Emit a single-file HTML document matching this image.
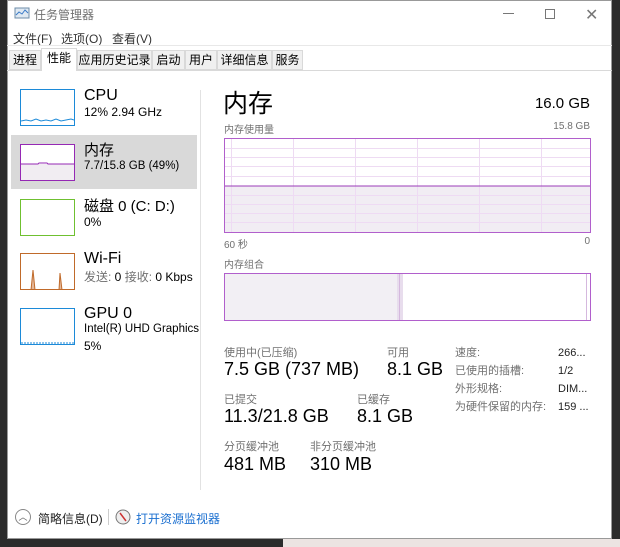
<!DOCTYPE html>
<html><head><meta charset="utf-8"><style>
*{margin:0;padding:0;box-sizing:border-box}
body{width:620px;height:547px;overflow:hidden;background:#2b2b2b;position:relative;font-family:"Liberation Sans","Noto Sans CJK SC",sans-serif;color:#000}
.a{position:absolute;white-space:nowrap}
.win{position:absolute;left:7px;top:0;width:605px;height:539px;background:#fff;border:1px solid #999}
.g{color:#707070}
.tab{position:absolute;top:50px;height:20px;background:#f0f0f0;border:1px solid #d9d9d9;font-size:12px;line-height:18px;text-align:center}
.th{position:absolute;left:20px;width:55px;height:37px;background:#fff}
</style></head><body>
<div class="a" style="left:0;top:539px;width:283px;height:8px;background:#2b2b2b"></div>
<div class="a" style="left:283px;top:539px;width:337px;height:8px;background:#ece4e2"></div>
<div class="win"></div>
<svg class="a" style="left:14px;top:7px" width="16" height="14"><rect x="1" y="1" width="14" height="10" fill="#dfe9f2" stroke="#6c8ca8"/><polyline points="2,8 5,5 8,7 11,3 14,6" fill="none" stroke="#3a7bc8"/></svg>
<div class="a g" style="left:34px;top:6px;font-size:12px">任务管理器</div>
<div class="a" style="left:503px;top:13px;width:11px;border-top:1px solid #777"></div>
<div class="a" style="left:545px;top:9px;width:10px;height:10px;border:1px solid #777"></div>
<div class="a" style="left:585px;top:5px;font-size:16px;color:#777">✕</div>
<div class="a" style="left:13px;top:30px;font-size:12px;color:#333">文件(F)</div>
<div class="a" style="left:61px;top:30px;font-size:12px;color:#333">选项(O)</div>
<div class="a" style="left:112px;top:30px;font-size:12px;color:#333">查看(V)</div>
<div class="a" style="left:7px;top:45px;width:605px;border-top:1px solid #e8e8e8"></div>
<div class="a" style="left:7px;top:70px;width:605px;border-top:1px solid #d9d9d9"></div>
<div class="tab" style="left:9px;width:32px">进程</div>
<div class="tab" style="left:41px;top:48px;width:36px;height:23px;background:#fff;border-bottom:none">性能</div>
<div class="tab" style="left:77px;width:75px">应用历史记录</div>
<div class="tab" style="left:152px;width:33px">启动</div>
<div class="tab" style="left:185px;width:32px">用户</div>
<div class="tab" style="left:217px;width:55px">详细信息</div>
<div class="tab" style="left:272px;width:31px">服务</div>
<div class="a" style="left:11px;top:135px;width:186px;height:54px;background:#d9d9d9"></div>
<div class="a" style="left:200px;top:90px;height:400px;border-left:1px solid #e2e2e2"></div>
<svg class="th" style="top:89px;border:1px solid #1c8ad8"><polyline points="0,31 5,30 10,31 15,29 20,31 25,30 30,31 35,29 40,31 45,30 50,29 53,30" fill="none" stroke="#1c8ad8"/></svg>
<svg class="th" style="top:144px;border:1px solid #9528b4;background:#fff"><rect x="0" y="19" width="53" height="17" fill="#f1edf2"/><polyline points="0,19 17,19 18,18 26,18 27,19 53,19" fill="none" stroke="#9528b4"/></svg>
<div class="th" style="top:199px;border:1px solid #6fc030"></div>
<svg class="th" style="top:253px;border:1px solid #c06a2a"><polyline points="10,36 12,16 14,36 38,36 39,19 41,36" fill="#e4b89a" stroke="#c06a2a"/></svg>
<svg class="th" style="top:308px;border:1px solid #1c8ad8"><line x1="0" y1="34" x2="53" y2="34" stroke="#1c8ad8" stroke-dasharray="2,1"/></svg>
<div class="a" style="left:84px;top:87px;font-size:16px">CPU</div>
<div class="a" style="left:84px;top:105px;font-size:12px">12% 2.94 GHz</div>
<div class="a" style="left:84px;top:139px;font-size:15px">内存</div>
<div class="a" style="left:84px;top:160px;font-size:11.5px">7.7/15.8 GB (49%)</div>
<div class="a" style="left:84px;top:195px;font-size:15px">磁盘 0 (C: D:)</div>
<div class="a" style="left:84px;top:215px;font-size:12px">0%</div>
<div class="a" style="left:84px;top:250px;font-size:16px">Wi-Fi</div>
<div class="a" style="left:84px;top:268px;font-size:12px"><span class="g">发送:</span> 0 <span class="g">接收:</span> 0 Kbps</div>
<div class="a" style="left:84px;top:305px;font-size:16px">GPU 0</div>
<div class="a" style="left:84px;top:323px;font-size:11.5px">Intel(R) UHD Graphics</div>
<div class="a" style="left:84px;top:339px;font-size:12px">5%</div>
<div class="a" style="left:223px;top:84px;font-size:25px">内存</div>
<div class="a" style="left:490px;top:95px;width:100px;text-align:right;font-size:15px">16.0 GB</div>
<div class="a g" style="left:224px;top:121px;font-size:10px">内存使用量</div>
<div class="a g" style="left:520px;top:121px;width:70px;text-align:right;font-size:10px">15.8 GB</div>
<svg class="a" style="left:224px;top:138px" width="367" height="95">
<rect x="0" y="48" width="367" height="47" fill="#f1edf3"/>
<g stroke="#eedbf3" stroke-width="1">
<line x1="7.5" y1="0" x2="7.5" y2="95"/><line x1="69.5" y1="0" x2="69.5" y2="95"/><line x1="131.5" y1="0" x2="131.5" y2="95"/><line x1="193.5" y1="0" x2="193.5" y2="95"/><line x1="255.5" y1="0" x2="255.5" y2="95"/><line x1="317.5" y1="0" x2="317.5" y2="95"/>
<line x1="0" y1="10.5" x2="367" y2="10.5"/><line x1="0" y1="19.5" x2="367" y2="19.5"/><line x1="0" y1="28.5" x2="367" y2="28.5"/><line x1="0" y1="38.5" x2="367" y2="38.5"/><line x1="0" y1="57.5" x2="367" y2="57.5"/><line x1="0" y1="66.5" x2="367" y2="66.5"/><line x1="0" y1="75.5" x2="367" y2="75.5"/><line x1="0" y1="84.5" x2="367" y2="84.5"/>
</g>
<line x1="0" y1="48" x2="367" y2="48" stroke="#9b3cb8"/>
<rect x="0.5" y="0.5" width="366" height="94" fill="none" stroke="#b15fcc"/>
</svg>
<div class="a g" style="left:224px;top:236px;font-size:10px">60 秒</div>
<div class="a g" style="left:580px;top:236px;width:10px;text-align:right;font-size:10px">0</div>
<div class="a g" style="left:224px;top:256px;font-size:10px">内存组合</div>
<svg class="a" style="left:224px;top:273px" width="367" height="48">
<rect x="0" y="0" width="173" height="48" fill="#f2eff4"/>
<rect x="173" y="0" width="6" height="48" fill="#e8dded"/>
<line x1="175.5" y1="0" x2="175.5" y2="48" stroke="#d5b8de"/>
<line x1="362.5" y1="0" x2="362.5" y2="48" stroke="#d5b8de"/>
<rect x="0.5" y="0.5" width="366" height="47" fill="none" stroke="#b15fcc"/>
</svg>
<div class="a g" style="left:224px;top:344px;font-size:11px">使用中(已压缩)</div>
<div class="a" style="left:224px;top:359px;font-size:18px">7.5 GB (737 MB)</div>
<div class="a g" style="left:387px;top:344px;font-size:11px">可用</div>
<div class="a" style="left:387px;top:359px;font-size:18px">8.1 GB</div>
<div class="a g" style="left:224px;top:391px;font-size:11px">已提交</div>
<div class="a" style="left:224px;top:406px;font-size:18px">11.3/21.8 GB</div>
<div class="a g" style="left:357px;top:391px;font-size:11px">已缓存</div>
<div class="a" style="left:357px;top:406px;font-size:18px">8.1 GB</div>
<div class="a g" style="left:224px;top:438px;font-size:11px">分页缓冲池</div>
<div class="a" style="left:224px;top:454px;font-size:18px">481 MB</div>
<div class="a g" style="left:310px;top:438px;font-size:11px">非分页缓冲池</div>
<div class="a" style="left:310px;top:454px;font-size:18px">310 MB</div>
<div class="a g" style="left:455px;top:344px;font-size:11px;line-height:18px">速度:<br>已使用的插槽:<br>外形规格:<br>为硬件保留的内存:</div>
<div class="a" style="left:558px;top:344px;font-size:11px;line-height:18px;color:#222">266...<br>1/2<br>DIM...<br>159 ...</div>
<div class="a" style="left:15px;top:509px;width:16px;height:16px;border:1px solid #888;border-radius:50%;font-size:9px;color:#666;text-align:center;line-height:14px">︿</div>
<div class="a" style="left:38px;top:510px;font-size:12px;color:#222">简略信息(D)</div>
<div class="a" style="left:108px;top:509px;height:16px;border-left:1px solid #ccc"></div>
<svg class="a" style="left:115px;top:509px" width="16" height="16"><circle cx="8" cy="8" r="7" fill="#eee" stroke="#777"/><line x1="5" y1="4" x2="11" y2="12" stroke="#c33" stroke-width="1.5"/></svg>
<div class="a" style="left:136px;top:510px;font-size:12px;color:#1a6fd0">打开资源监视器</div>
</body></html>
